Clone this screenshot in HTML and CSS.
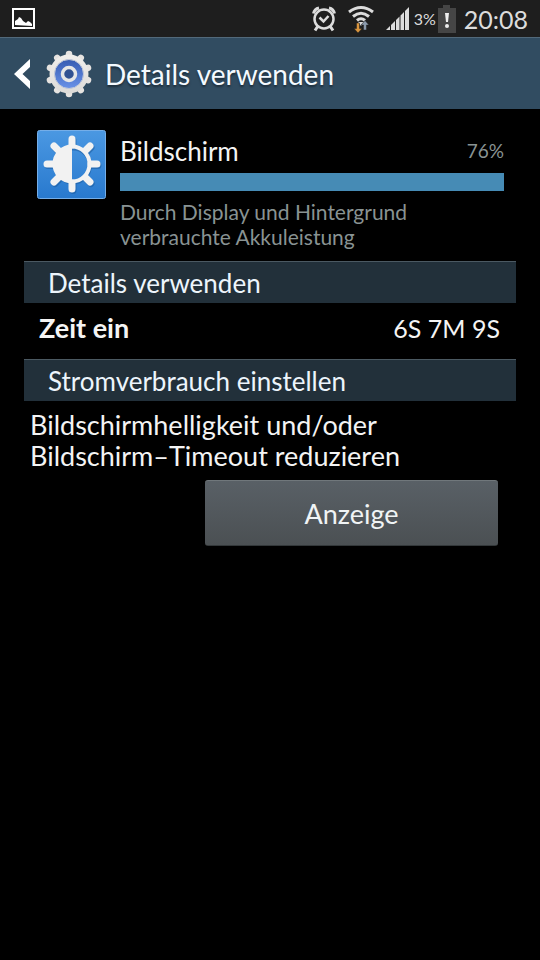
FILE: index.html
```html
<!DOCTYPE html>
<html lang="de">
<head>
<meta charset="utf-8">
<meta name="viewport" content="width=device-width, initial-scale=1">
<title>Details verwenden</title>
<link rel="stylesheet" href="styles.css">
</head>
<body>
<div class="status">
  <svg class="status-picture" width="24" height="22" viewBox="0 0 24 22" aria-hidden="true">
    <rect x="1" y="1" width="21" height="19" fill="none" stroke="#fff" stroke-width="2"/>
    <path d="M3 17v-4l3-2 1-2 2 1 2 3 3 2 2-2 2 1 2 2v2z" fill="#fff"/>
  </svg>
  <svg class="status-alarm" width="24" height="26" viewBox="0 0 24 26" fill="none" stroke="#dcdcdc" aria-hidden="true">
    <circle cx="12" cy="13" r="9.500" stroke-width="2.5"/>
    <path d="M7.500 11.500l4 4 5-5.500" stroke-width="2.5"/>
    <path d="M1.500 7.500Q2.500 3 7 2M22.500 7.500Q21.500 3 17 2" stroke-width="3"/>
    <path d="M6 20l-3 4.500M18 20l3 4.500" stroke-width="3"/>
  </svg>
  <svg class="status-wifi" width="26" height="28" viewBox="0 0 26 28" fill="none" stroke="#dcdcdc" stroke-width="3" aria-hidden="true">
    <path d="M1 7Q13-2 25 7M5 11.500Q13 5 21 11.500M9 15.500Q13 12 17 15.500"/>
    <path d="M10 17h6l-3 4z" fill="#dcdcdc" stroke="none"/>
    <path d="M8.500 18h3v5.500H14L10 28l-4-4.500h2.500z" fill="#d9953f" stroke="#1e1e1e" stroke-width=".5"/>
    <path d="M15.500 25v-5H13l4-4.500 4 4.500h-2.500v5z" fill="#8a99ab" stroke="#1e1e1e" stroke-width=".5"/>
  </svg>
  <svg class="status-signal" width="24" height="24" viewBox="0 0 24 24" fill="#dcdcdc" aria-hidden="true">
    <path d="M0 23l4-4v4zM5 18l4-4v9H5zM10 13l3.500-3.500V23H10zM14.500 8.500L18 5v18h-3.500zM19 4l4-4v23h-4z"/>
  </svg>
  <span class="status-percent">3%</span>
  <svg class="status-battery" width="18" height="28" viewBox="0 0 18 28" aria-hidden="true">
    <path d="M5 0h7v3h6v25H0V3h5z" fill="#454545"/>
    <path d="M7 8h4l-1 9H8z" fill="#eee"/><circle cx="9" cy="21" r="2" fill="#eee"/>
  </svg>
  <time class="status-time">20:08</time>
</div>
<header class="bar">
  <a class="back" href="#" aria-label="Zurück">
    <svg width="18" height="30" viewBox="0 0 18 30" aria-hidden="true"><path d="M16 0v8L8.500 15 16 22v8L0 15z" fill="#fff"/></svg>
    <svg class="gear" width="48" height="48" viewBox="0 0 48 48" aria-hidden="true">
      <defs>
        <linearGradient id="metal" x2="0" y2="1"><stop stop-color="#f0eeeb"/><stop offset="1" stop-color="#dddbd8"/></linearGradient>
        <linearGradient id="blue" x2="0" y2="1"><stop stop-color="#365bb2"/><stop offset="1" stop-color="#6a92e8"/></linearGradient>
      </defs>
      <path d="M24 4v40M12.240 7.820l23.520 32.360M4.980 17.820l38.040 12.360M4.980 30.180l38.040-12.360M12.240 40.180L35.760 7.820" stroke="#e6e3e0" stroke-width="6.500" stroke-linecap="round"/>
      <circle cx="24" cy="24" r="19.500" fill="url(#metal)"/>
      <circle cx="24" cy="24" r="14.500" fill="url(#blue)" stroke="#c5cbd8"/>
      <circle cx="24" cy="24" r="6.500" fill="#315191" stroke="#e6e6e6" stroke-width="3.500"/>
    </svg>
  </a>
  <h1 class="title">Details verwenden</h1>
</header>
<main class="content">
  <section class="usage">
    <svg class="app-icon" width="69" height="69" viewBox="0 0 69 69" aria-hidden="true">
      <defs><linearGradient id="tile" x2="0" y2="1"><stop stop-color="#4b98e2"/><stop offset="1" stop-color="#2879ce"/></linearGradient></defs>
      <rect x=".5" y=".5" width="68" height="68" rx="2" fill="url(#tile)" stroke="#75aee8"/>
      <g stroke="#165393" stroke-opacity=".45" transform="translate(1 1.500)" fill="none">
        <circle cx="35" cy="34" r="17" stroke-width="4"/>
        <path d="M35 14V9M35 54v5M15 34h-5M55 34h5M21 20l-4-4M49 20l4-4M21 48l-4 4M49 48l4 4" stroke-width="7" stroke-linecap="round"/>
      </g>
      <g stroke="#f2f2f2" fill="none">
        <circle cx="35" cy="34" r="17.500" stroke-width="4"/>
        <path d="M35 15V9M35 53v6M16 34h-6M54 34h6M21 20l-4-4M49 20l4-4M21 48l-4 4M49 48l4 4" stroke-width="7" stroke-linecap="round"/>
      </g>
      <path d="M35 16a18 18 0 0 0 0 36z" fill="#f2f2f2"/>
    </svg>
    <div class="usage-body">
      <div class="usage-head"><h2 class="usage-name">Bildschirm</h2><span class="usage-value">76%</span></div>
      <div class="meter"></div>
      <p class="usage-note">Durch Display und Hintergrund<br>verbrauchte Akkuleistung</p>
    </div>
  </section>
  <h2 class="section">Details verwenden</h2>
  <dl class="row"><dt>Zeit ein</dt><dd>6S 7M 9S</dd></dl>
  <h2 class="section">Stromverbrauch einstellen</h2>
  <p class="advice">Bildschirmhelligkeit und/oder<br>Bildschirm–Timeout reduzieren</p>
  <div class="actions"><button class="button" type="button">Anzeige</button></div>
</main>
</body>
</html>
```
FILE: styles.css
```css
* { box-sizing: border-box; }
body {
  margin: 0;
  background: #000;
  color: #f4f4f4;
  font-family: Lato, "Open Sans", sans-serif;
}
h1, h2, p, dl, dd { margin: 0; font-weight: 400; }
svg { display: block; flex: none; }

.status {
  display: flex;
  align-items: center;
  height: 37px;
  padding: 0 12px;
  background: #1e1e1e;
  color: #dcdcdc;
}
.status-alarm { margin-left: auto; }
.status-wifi { margin-left: 12px; }
.status-signal { margin-left: 12px; }
.status-percent { margin-left: 4px; font-size: 16px; }
.status-battery { margin-left: 2px; }
.status-time { margin-left: 8px; font-size: 25px; line-height: 36px; }

.bar {
  display: flex;
  align-items: center;
  height: 72px;
  padding: 0 14px;
  background: #314c61;
  border-top: 1px solid #52697a;
}
.back { display: flex; align-items: center; gap: 13px; }
.title { margin-left: 12px; font-size: 28px; line-height: 36px; color: #f4faff; text-shadow: 0 2px 2px #1d2d3a; }

.content { padding: 21px 24px; }
.usage { display: flex; gap: 14px; padding: 0 12px 12px 13px; }
.usage-body { flex: 1; padding-top: 5px; }
.usage-head { display: flex; justify-content: space-between; line-height: 32px; }
.usage-name { font-size: 26px; }
.usage-value { font-size: 19px; color: #899393; }
.meter { height: 18px; margin-top: 6px; background: #468bb5; }
.usage-note { margin-top: 8px; font-size: 21px; line-height: 25px; color: #899393; }

.section {
  height: 42px;
  padding: 0 24px;
  border-top: 1px solid #4b5962;
  background: #22303a;
  color: #edf5fc;
  font-size: 26px;
  line-height: 42px;
}
.row {
  display: flex;
  justify-content: space-between;
  height: 56px;
  padding: 0 16px 0 15px;
  font-size: 25px;
  line-height: 50px;
}
.row dt { font-size: 27px; font-weight: 700; }
.advice { padding: 8px 6px 9px; font-size: 27px; line-height: 31px; }
.actions { display: flex; justify-content: flex-end; padding-right: 18px; }
.button {
  width: 62%;
  max-width: 293px;
  height: 66px;
  border: 0;
  border-top: 1px solid #70777b;
  border-bottom: 1px solid #33383a;
  border-radius: 3px;
  background: linear-gradient(#596066, #4b5053);
  color: #f0f4f5;
  font: inherit;
  font-size: 27px;
}
```
